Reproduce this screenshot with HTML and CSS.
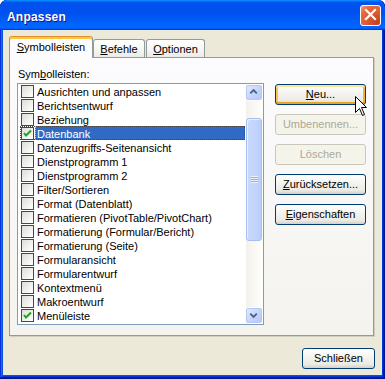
FILE: index.html
```html
<!DOCTYPE html>
<html lang="de">
<head>
<meta charset="utf-8">
<title>Anpassen</title>
<link rel="stylesheet" href="styles.css">
</head>
<body>
<div class="window">
  <div class="titlebar">
    <span class="title">Anpassen</span>
    <button class="close" aria-label="Schließen">
      <svg width="19" height="19" viewBox="0 0 19 19"><path d="M5 4 L14 13 M14 4 L5 13" stroke="#fff" stroke-width="2.2" stroke-linecap="square" fill="none"/></svg>
    </button>
  </div>
  <div class="client">
    <div class="tabs">
      <div class="tab active"><u>S</u>ymbolleisten</div>
      <div class="tab tab-befehle"><u>B</u>efehle</div>
      <div class="tab tab-optionen"><u>O</u>ptionen</div>
    </div>
    <div class="panel">
      <div class="label">Sym<u>b</u>olleisten:</div>
      <div class="panel-body">
        <div class="listbox">
          <ul class="items">
            <li class="item"><span class="cb"></span><span class="item-text">Ausrichten und anpassen</span></li>
            <li class="item"><span class="cb"></span><span class="item-text">Berichtsentwurf</span></li>
            <li class="item"><span class="cb"></span><span class="item-text">Beziehung</span></li>
            <li class="item sel"><span class="cb"><svg class="check" width="11" height="11" viewBox="0 0 11 11"><path d="M2 5 L4 7.5 L9 2.5" stroke="#21A121" stroke-width="2" fill="none"/></svg></span><span class="item-text">Datenbank</span></li>
            <li class="item"><span class="cb"></span><span class="item-text">Datenzugriffs-Seitenansicht</span></li>
            <li class="item"><span class="cb"></span><span class="item-text">Dienstprogramm 1</span></li>
            <li class="item"><span class="cb"></span><span class="item-text">Dienstprogramm 2</span></li>
            <li class="item"><span class="cb"></span><span class="item-text">Filter/Sortieren</span></li>
            <li class="item"><span class="cb"></span><span class="item-text">Format (Datenblatt)</span></li>
            <li class="item"><span class="cb"></span><span class="item-text">Formatieren (PivotTable/PivotChart)</span></li>
            <li class="item"><span class="cb"></span><span class="item-text">Formatierung (Formular/Bericht)</span></li>
            <li class="item"><span class="cb"></span><span class="item-text">Formatierung (Seite)</span></li>
            <li class="item"><span class="cb"></span><span class="item-text">Formularansicht</span></li>
            <li class="item"><span class="cb"></span><span class="item-text">Formularentwurf</span></li>
            <li class="item"><span class="cb"></span><span class="item-text">Kontextmenü</span></li>
            <li class="item"><span class="cb"></span><span class="item-text">Makroentwurf</span></li>
            <li class="item"><span class="cb"><svg class="check" width="11" height="11" viewBox="0 0 11 11"><path d="M2 5 L4 7.5 L9 2.5" stroke="#21A121" stroke-width="2" fill="none"/></svg></span><span class="item-text">Menüleiste</span></li>
          </ul>
          <div class="scrollbar">
            <div class="sb-btn"><svg width="15" height="15" viewBox="0 0 15 15"><path d="M3.5 8.5 L7 5 L10.5 8.5" stroke="#4D6185" stroke-width="2" fill="none"/></svg></div>
            <div class="sb-track">
              <div class="thumb"><span class="grip"></span></div>
            </div>
            <div class="sb-btn"><svg width="15" height="15" viewBox="0 0 15 15"><path d="M3.5 5.5 L7 9 L10.5 5.5" stroke="#4D6185" stroke-width="2" fill="none"/></svg></div>
          </div>
        </div>
        <div class="buttons">
          <button class="btn hot"><u>N</u>eu...</button>
          <button class="btn" disabled>Umbenennen...</button>
          <button class="btn" disabled>Löschen</button>
          <button class="btn"><u>Z</u>urücksetzen...</button>
          <button class="btn"><u>E</u>igenschaften</button>
        </div>
      </div>
    </div>
    <div class="footer">
      <button class="btn btn-close">Schließen</button>
    </div>
  </div>
  <svg class="cursor" width="13" height="21" viewBox="0 0 13 21"><path d="M0.5 0.5 L0.5 16.5 L4.5 12.5 L7.5 19.5 L9.5 18.5 L6.5 11.5 L11.5 11.5 Z" fill="#fff" stroke="#000" stroke-width="1"/></svg>
</div>
</body>
</html>
```
FILE: styles.css
```css
* { box-sizing: border-box; }
html, body { margin: 0; padding: 0; }
body {
  width: 385px;
  height: 379px;
  overflow: hidden;
  background: #fff;
  font-family: "Liberation Sans", Arial, sans-serif;
  font-size: 11px;
}
.window {
  position: relative;
  width: 385px;
  height: 379px;
  display: flex;
  flex-direction: column;
  background: #0855dd;
  border-radius: 7px 7px 0 0;
  overflow: hidden;
  box-shadow: inset -1px -1px #00138c, inset 1px 1px #0831d9, inset -2px -2px #001ea0, inset 2px 2px #166aee, inset -3px -3px #003bda, inset 3px 3px #0855dd;
}
.titlebar {
  height: 30px;
  flex: none;
  display: flex;
  align-items: flex-start;
  justify-content: space-between;
  background: linear-gradient(180deg, #0997ff, #0053ee 8%, #0050ee 40%, #06f 88%, #06f 93%, #005bff 95%, #003dd7 96%, #003dd7);
  border-radius: 7px 7px 0 0;
}
.title {
  color: #fff;
  font-weight: bold;
  font-size: 12px;
  line-height: 14px;
  padding: 10px 0 0 7px;
  text-shadow: 1px 1px #0f1089;
  letter-spacing: 0.2px;
}
.close {
  width: 21px;
  height: 21px;
  margin: 5px 4px 0 0;
  padding: 0;
  border: 1px solid #fff;
  border-radius: 3px;
  background: radial-gradient(circle at 85% 85%, #c4401c 0%, #dd5a33 45%, #e46a45 75%, #f0a084 100%);
  display: flex;
  align-items: center;
  justify-content: center;
}
.client {
  flex: 1;
  margin: 0 3px 4px;
  background: #ece9d8;
  display: flex;
  flex-direction: column;
}
.tabs {
  display: flex;
  align-items: flex-end;
  height: 21px;
  margin: 6px 0 0 6px;
}
.tab {
  height: 18px;
  padding: 3px 0 1px;
  border: 1px solid #919b9c;
  border-bottom: 0;
  border-radius: 3px 3px 0 0;
  background: linear-gradient(#fff, #f7f7f4 50%, #ecebe6);
  line-height: 13px;
  text-align: center;
  color: #000;
  white-space: nowrap;
}
.tab-befehle { width: 52px; }
.tab-optionen { width: 59px; margin-left: 1px; }
.tab.active {
  position: relative;
  z-index: 1;
  width: 84px;
  height: 22px;
  margin-bottom: -1px;
  padding: 4px 0 4px;
  border-top: 1px solid #e68b2c;
  border-left-color: #919b9c;
  background: #fcfcfe;
  box-shadow: inset 0 2px #ffc73c;
}
.panel {
  margin-left: 6px;
  width: 365px;
  height: 279px;
  border: 1px solid #919b9c;
  background: linear-gradient(#fcfcfe, #f4f3ee);
  padding: 10px 7px 0 7px;
  box-shadow: 1px 1px 0 #d0cebf;
}
.label {
  height: 13px;
  line-height: 13px;
  padding-left: 1px;
}
.panel-body {
  display: flex;
  gap: 11px;
  margin-top: 2px;
}
.listbox {
  width: 247px;
  height: 242px;
  border: 1px solid #7f9db9;
  background: #fff;
  display: flex;
}
.items {
  flex: 1;
  list-style: none;
  margin: 0;
  padding: 0;
  min-width: 0;
}
.item {
  height: 14px;
  display: flex;
  align-items: flex-start;
  margin: 0 1px 0 2px;
  padding-left: 1px;
}
.cb {
  flex: none;
  width: 13px;
  height: 13px;
  margin-top: 1px;
  border: 1px solid #1c5180;
  background: linear-gradient(135deg, #dcdcd7, #fbfbf9 85%, #fff);
  display: flex;
  align-items: center;
  justify-content: center;
}
.item-text {
  flex: 1;
  height: 14px;
  margin-left: 1px;
  padding: 2px 0 0 2px;
  line-height: 12px;
  white-space: nowrap;
  overflow: hidden;
  color: #000;
}
.item.sel {
  outline: 1px dotted #444;
  outline-offset: -1px;
}
.item.sel .item-text {
  background: #316ac5;
  color: #fff;
  outline: 1px dotted #f2c25a;
  outline-offset: -1px;
}
.scrollbar {
  flex: none;
  width: 17px;
  display: flex;
  flex-direction: column;
  background: linear-gradient(to right, #f3f1ec, #fefefb);
}
.sb-btn {
  flex: none;
  height: 17px;
  margin: 1px 1px 1px 0;
  height: 15px;
  border: 1px solid #b5c8f3;
  border-radius: 2px;
  background: linear-gradient(135deg, #e0e9fe, #c6d6fc 50%, #b6c9f5);
  box-shadow: 0 0 0 1px #fdfdfe;
  display: flex;
  align-items: center;
  justify-content: center;
}
.sb-track {
  flex: 1;
  padding-top: 17px;
}
.thumb {
  height: 123px;
  margin-right: 1px;
  border: 1px solid #a7bdf0;
  border-radius: 3px;
  background: linear-gradient(to right, #cad9fd, #c2d4fc 60%, #b9cdf9);
  box-shadow: inset 1px 1px #e8efff;
  display: flex;
  align-items: center;
  justify-content: center;
}
.grip {
  width: 7px;
  height: 7px;
  background: repeating-linear-gradient(#eef4fe 0 1px, #8eaeef 1px 2px);
}
.buttons {
  width: 91px;
  margin-top: 1px;
  display: flex;
  flex-direction: column;
  gap: 9px;
}
.btn {
  width: 91px;
  height: 21px;
  padding: 0;
  border: 1px solid #003c74;
  border-radius: 3px;
  background: linear-gradient(#fff, #f4f4f0 40%, #ecebe6 80%, #d6d0c5);
  font-family: "Liberation Sans", Arial, sans-serif;
  font-size: 11px;
  line-height: 13px;
  color: #000;
  text-align: center;
}
.btn.hot {
  box-shadow: inset 0 2px #ffe39a, inset 0 -2px #eba325, inset 2px 0 #f9c35a, inset -2px 0 #f4b13c;
}
.btn:disabled {
  border-color: #c9c7ba;
  color: #aca899;
  background: #f5f4ea;
}
.footer {
  display: flex;
  justify-content: flex-end;
  padding: 12px 7px 0 0;
}
.btn-close { width: 73px; }
.cursor {
  position: absolute;
  left: 355px;
  top: 96px;
}
```
